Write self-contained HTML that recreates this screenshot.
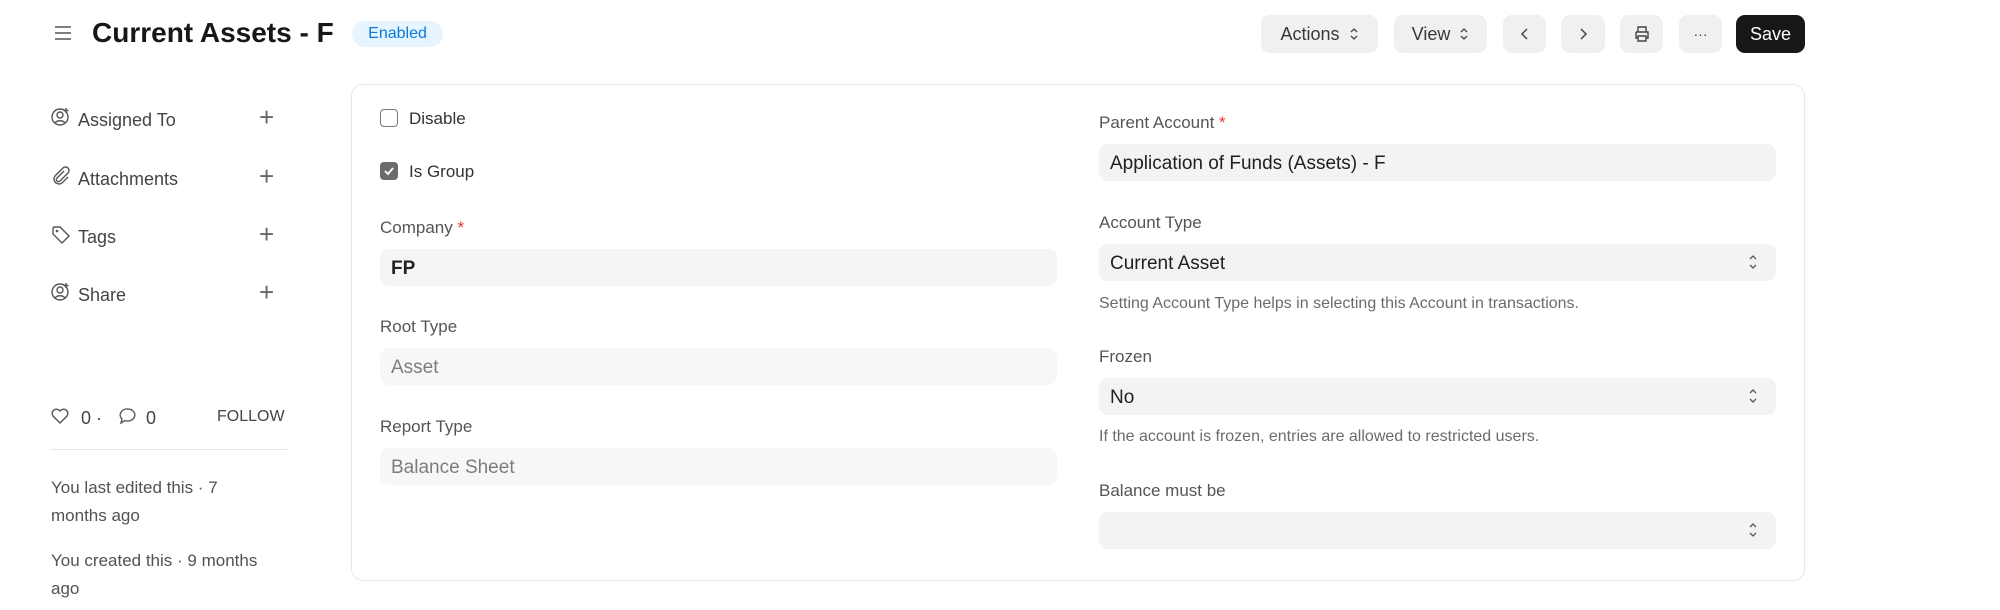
<!DOCTYPE html>
<html><head><meta charset="utf-8"><style>
*{box-sizing:border-box;margin:0;padding:0}
body{width:2000px;height:610px;background:#fff;font-family:"Liberation Sans",sans-serif;color:#383838;position:relative;overflow:hidden}
.a{position:absolute}
.title{left:92px;top:15px;font-size:28px;font-weight:bold;color:#171717;line-height:36px}
.badge{left:352px;top:21px;width:91px;height:26px;border-radius:13px;background:#e6f4ff;color:#0a79d8;font-size:16px;line-height:26px;text-align:center}
.btn{top:15px;height:38px;border-radius:9px;background:#f0f0f0;font-size:18px;line-height:38px;color:#383838;text-align:center}
.save{background:#171717;color:#fff}
.card{left:351px;top:84px;width:1454px;height:497px;border:1px solid #e8e8e8;border-radius:12px}
.lbl{font-size:17px;color:#555;line-height:20px;margin-top:2px}
.req{color:#e03636}
.inp{height:37px;border-radius:9px;background:#f3f3f3;font-size:19px;line-height:39px;padding-left:11px;color:#1f1f1f}
.ro{background:#f7f7f7;color:#7c7c7c}
.help{font-size:16px;color:#6b6b6b;line-height:20px;margin-top:2px}
.side{font-size:18px;color:#444;line-height:22px;margin-top:2px}
.plus{font-size:26px;color:#666;line-height:22px;font-weight:300}
.arr{position:absolute;right:18px;top:9px}
</style></head><body>
<svg class="a" style="left:53px;top:23px" width="20" height="20" viewBox="0 0 20 20"><path d="M2 4h16M2 10h16M2 16h16" stroke="#555" stroke-width="1.6"/></svg>
<div class="a title">Current Assets - F</div>
<div class="a badge">Enabled</div>

<div class="a btn" style="left:1261px;width:117px">Actions <svg width="10" height="16" viewBox="0 0 10 16" style="vertical-align:-2px;margin-left:4px"><path d="M2 6l3-3 3 3M2 10l3 3 3-3" fill="none" stroke="#444" stroke-width="1.3"/></svg></div>
<div class="a btn" style="left:1394px;width:93px">View <svg width="10" height="16" viewBox="0 0 10 16" style="vertical-align:-2px;margin-left:4px"><path d="M2 6l3-3 3 3M2 10l3 3 3-3" fill="none" stroke="#444" stroke-width="1.3"/></svg></div>
<div class="a btn" style="left:1503px;width:43px"><svg width="14" height="14" viewBox="0 0 14 14" style="vertical-align:-1px"><path d="M9 2L4 7l5 5" fill="none" stroke="#444" stroke-width="1.5"/></svg></div>
<div class="a btn" style="left:1561px;width:44px"><svg width="14" height="14" viewBox="0 0 14 14" style="vertical-align:-1px"><path d="M5 2l5 5-5 5" fill="none" stroke="#444" stroke-width="1.5"/></svg></div>
<div class="a btn" style="left:1620px;width:43px"><svg width="18" height="18" viewBox="0 0 18 18" style="vertical-align:-3px"><path d="M5 7V2h8v5M3 7h12v6h-2M5 13H3V7M5 11h8v5H5z" fill="none" stroke="#444" stroke-width="1.4"/></svg></div>
<div class="a btn" style="left:1679px;width:43px;font-size:14px">&middot;&middot;&middot;</div>
<div class="a btn save" style="left:1736px;width:69px">Save</div>

<!-- sidebar -->
<svg class="a" style="left:51px;top:107px" width="20" height="20" viewBox="0 0 20 20"><circle cx="9" cy="10" r="8" fill="none" stroke="#555" stroke-width="1.4"/><circle cx="9" cy="8" r="3" fill="none" stroke="#555" stroke-width="1.4"/><path d="M4 16c2-3 8-3 10 0M15 1v5M12.5 3.5h5" fill="none" stroke="#555" stroke-width="1.4"/></svg>
<div class="a side" style="left:78px;top:107px">Assigned To</div>
<div class="a plus" style="left:259px;top:106px">+</div>
<svg class="a" style="left:51px;top:166px" width="20" height="20" viewBox="0 0 20 20"><path d="M13 5l-7 7a2 2 0 0 0 3 3l8-8a3.5 3.5 0 0 0-5-5l-8 8a5 5 0 0 0 7 7l6-6" fill="none" stroke="#555" stroke-width="1.4"/></svg>
<div class="a side" style="left:78px;top:166px">Attachments</div>
<div class="a plus" style="left:259px;top:165px">+</div>
<svg class="a" style="left:51px;top:225px" width="20" height="20" viewBox="0 0 20 20"><path d="M2 3v6l9 9 7-7-9-9H3z" fill="none" stroke="#555" stroke-width="1.4"/><circle cx="6" cy="6" r="1.3" fill="#555"/></svg>
<div class="a side" style="left:78px;top:224px">Tags</div>
<div class="a plus" style="left:259px;top:223px">+</div>
<svg class="a" style="left:51px;top:282px" width="20" height="20" viewBox="0 0 20 20"><circle cx="9" cy="10" r="8" fill="none" stroke="#555" stroke-width="1.4"/><circle cx="9" cy="8" r="3" fill="none" stroke="#555" stroke-width="1.4"/><path d="M4 16c2-3 8-3 10 0M15 1v5M12.5 3.5h5" fill="none" stroke="#555" stroke-width="1.4"/></svg>
<div class="a side" style="left:78px;top:282px">Share</div>
<div class="a plus" style="left:259px;top:281px">+</div>

<svg class="a" style="left:50px;top:406px" width="20" height="20" viewBox="0 0 20 20"><path d="M10 17L3 10a4 4 0 0 1 7-5 4 4 0 0 1 7 5z" fill="none" stroke="#555" stroke-width="1.4"/></svg>
<div class="a side" style="left:81px;top:405px">0 &middot;</div>
<svg class="a" style="left:118px;top:406px" width="20" height="20" viewBox="0 0 20 20"><path d="M10 3a7 6 0 1 1-3 11.5L3 17l1-4A7 6 0 0 1 10 3z" fill="none" stroke="#555" stroke-width="1.4"/></svg>
<div class="a side" style="left:146px;top:405px">0</div>
<div class="a side" style="left:217px;top:404px;font-size:16px">FOLLOW</div>
<div class="a" style="left:51px;top:449px;width:236px;height:1px;background:#e4e4e4"></div>
<div class="a side" style="left:51px;top:472px;width:260px;line-height:28px;font-size:17px;color:#525252">You last edited this &middot; 7<br>months ago</div>
<div class="a side" style="left:51px;top:545px;width:260px;line-height:28px;font-size:17px;color:#525252">You created this &middot; 9 months<br>ago</div>

<div class="a card"></div>
<!-- left column -->
<div class="a" style="left:380px;top:109px;width:18px;height:18px;border:1.5px solid #777;border-radius:4px"></div>
<div class="a lbl" style="left:409px;top:107px;color:#333">Disable</div>
<div class="a" style="left:380px;top:162px;width:18px;height:18px;background:#6b6b6b;border-radius:4px"><svg width="18" height="18" viewBox="0 0 18 18"><path d="M5 9l3 3 5-6" fill="none" stroke="#fff" stroke-width="1.8"/></svg></div>
<div class="a lbl" style="left:409px;top:160px;color:#333">Is Group</div>

<div class="a lbl" style="left:380px;top:216px">Company <span class="req">*</span></div>
<div class="a inp" style="left:380px;top:249px;width:677px;background:#f5f5f5;font-weight:bold;color:#222">FP</div>
<div class="a lbl" style="left:380px;top:315px">Root Type</div>
<div class="a inp ro" style="left:380px;top:348px;width:677px">Asset</div>
<div class="a lbl" style="left:380px;top:415px">Report Type</div>
<div class="a inp ro" style="left:380px;top:448px;width:677px">Balance Sheet</div>

<!-- right column -->
<div class="a lbl" style="left:1099px;top:111px">Parent Account <span class="req">*</span></div>
<div class="a inp" style="left:1099px;top:144px;width:677px">Application of Funds (Assets) - F</div>
<div class="a lbl" style="left:1099px;top:211px">Account Type</div>
<div class="a inp" style="left:1099px;top:244px;width:677px">Current Asset<svg class="arr" width="10" height="18" viewBox="0 0 10 18"><path d="M2 6l3-3 3 3M2 12l3 3 3-3" fill="none" stroke="#555" stroke-width="1.3"/></svg></div>
<div class="a help" style="left:1099px;top:292px">Setting Account Type helps in selecting this Account in transactions.</div>
<div class="a lbl" style="left:1099px;top:345px">Frozen</div>
<div class="a inp" style="left:1099px;top:378px;width:677px">No<svg class="arr" width="10" height="18" viewBox="0 0 10 18"><path d="M2 6l3-3 3 3M2 12l3 3 3-3" fill="none" stroke="#555" stroke-width="1.3"/></svg></div>
<div class="a help" style="left:1099px;top:425px">If the account is frozen, entries are allowed to restricted users.</div>
<div class="a lbl" style="left:1099px;top:479px">Balance must be</div>
<div class="a inp" style="left:1099px;top:512px;width:677px"><svg class="arr" width="10" height="18" viewBox="0 0 10 18"><path d="M2 6l3-3 3 3M2 12l3 3 3-3" fill="none" stroke="#555" stroke-width="1.3"/></svg></div>
</body></html>
